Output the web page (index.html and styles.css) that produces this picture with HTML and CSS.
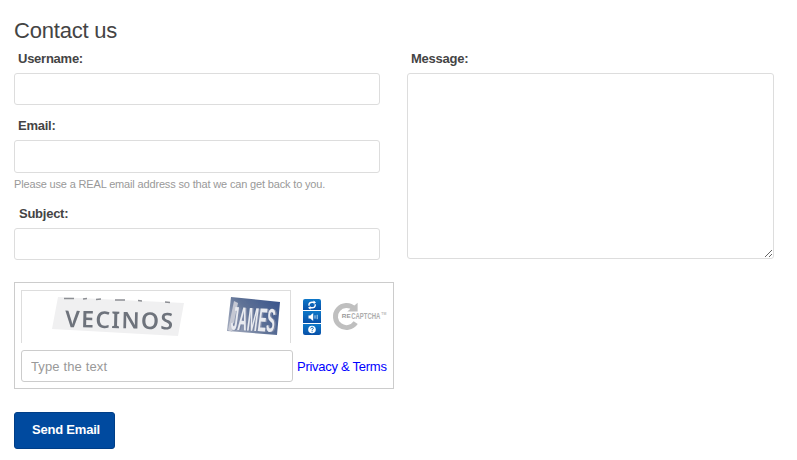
FILE: index.html
```html
<!DOCTYPE html>
<html lang="en">
<head>
<meta charset="utf-8">
<title>Contact us</title>
<link rel="stylesheet" href="styles.css">
</head>
<body>
<form class="contact">
  <h1 class="title">Contact us</h1>
  <div class="columns">
    <div class="column">
      <div class="field">
        <label class="label" for="username">Username:</label>
        <input class="input" id="username" type="text">
      </div>
      <div class="field email">
        <label class="label" for="email">Email:</label>
        <input class="input" id="email" type="text">
        <p class="help">Please use a REAL email address so that we can get back to you.</p>
      </div>
      <div class="field">
        <label class="label subject" for="subject">Subject:</label>
        <input class="input" id="subject" type="text">
      </div>
    </div>
    <div class="column">
      <label class="label" for="message">Message:</label>
      <textarea class="input message" id="message"></textarea>
    </div>
  </div>
  <div class="captcha">
    <div class="captcha-row">
      <div class="challenge">
        <svg width="268" height="52" viewBox="22 291 268 52">
          <defs>
            <filter id="soft" x="-10%" y="-10%" width="120%" height="120%"><feGaussianBlur stdDeviation=".7"/></filter>
            <linearGradient id="navy" x1="0" y1=".6" x2="1" y2="0"><stop offset="0" stop-color="#9aa3b8"/><stop offset=".4" stop-color="#5f7296"/><stop offset="1" stop-color="#35518b"/></linearGradient>
          </defs>
          <g filter="url(#soft)">
            <path d="M58 297 184 303 178 336 52 329z" fill="#f0f0f1"/>
            <path d="M64 298.500h10M83 299l4-.5M96 299.500l5-.5M115 300h10M138 300.500l4 .5M165 302l5 .5" stroke="#8d8f94" stroke-width="1.400"/>
            <text class="word" x="65" y="327" textLength="108" lengthAdjust="spacing" transform="rotate(1.300 65 327)">VECINOS</text>
            <path d="M231 297 280 302 277 335 227 331z" fill="url(#navy)"/>
            <path d="M228 330 234 301 238 303 232 332z" fill="#c5c8d3"/>
            <text class="word-two shade" x="232" y="330" textLength="44" lengthAdjust="spacingAndGlyphs" transform="rotate(3 232 330)">JAMES</text>
            <text class="word-two" x="230.500" y="329.500" textLength="44" lengthAdjust="spacingAndGlyphs" transform="rotate(3 230 329)">JAMES</text>
          </g>
        </svg>
      </div>
      <div class="controls">
        <span class="control"><svg width="18" height="12" viewBox="0 0 18 12"><path d="M6 6.800V5.500Q6.300 3.300 9 3.300h2.200M12.200 5.200v1.300Q11.900 8.800 9.200 8.800H7" fill="none" stroke="#fff" stroke-width="1.400"/><path d="M10.600 1.500 13 3.400 10.600 5.200zM7.500 7 5 8.800l2.500 1.900z" fill="#fff"/></svg></span>
        <span class="control"><svg width="18" height="12" viewBox="0 0 18 12"><path d="M5.500 4.500h1.700L10.200 2v8L7.200 7.500H5.500z" fill="#fff"/><path d="M12 4.300v3.400M14.200 3.800v4.400" stroke="#b8d9f2" stroke-width="1"/></svg></span>
        <span class="control"><svg width="18" height="12" viewBox="0 0 18 12"><circle cx="9" cy="5.500" r="3.800" fill="#fff"/><path d="M7.600 4.500Q7.800 3.200 9.100 3.200q1.300 0 1.300 1.200 0 .7-1.300 1.200v.8M9.100 7.100v1" fill="none" stroke="#1672bd" stroke-width="1"/></svg></span>
      </div>
      <svg class="logo" width="56" height="32" viewBox="332 300 56 32">
        <path d="M354.500 308.500A11.200 11.200 0 1 0 356 322.800" fill="none" stroke="#bfbfbf" stroke-width="5"/>
        <path d="M358 302.500v9h-10.500z" fill="#bfbfbf"/>
        <path d="M341 312.500h10v7h-10z" fill="#fff"/>
        <text class="logo-re" x="342" y="318" textLength="9" lengthAdjust="spacingAndGlyphs">RE</text>
        <text class="logo-name" x="351.500" y="319.500" textLength="29.500" lengthAdjust="spacingAndGlyphs">CAPTCHA</text>
        <text class="logo-tm" x="382" y="315.500" textLength="5" lengthAdjust="spacingAndGlyphs">TM</text>
      </svg>
    </div>
    <div class="answer-row">
      <input class="answer" type="text" placeholder="Type the text">
      <a class="terms" href="#">Privacy &amp; Terms</a>
    </div>
  </div>
  <button class="send" type="button">Send Email</button>
</form>
</body>
</html>
```
FILE: styles.css
```css
* { box-sizing: border-box; }
body {
  margin: 0;
  background: #fff;
  color: #444;
  font-family: "Liberation Sans", Arial, sans-serif;
  font-size: 13px;
}
.contact { padding: 17px 0 0 14px; }
.title {
  margin: 0;
  font-size: 22px;
  line-height: 28px;
  font-weight: 400;
  letter-spacing: -.2px;
}
.columns {
  display: grid;
  grid-template-columns: 366px 367px;
  column-gap: 27px;
}
.column { min-width: 0; }
.field { height: 67px; }
.field.email { height: 88px; }
.label {
  display: block;
  height: 28px;
  padding: 5px 0 0 4px;
  line-height: 18px;
  font-weight: 700;
  letter-spacing: -.25px;
}
.label.subject { padding-left: 5px; }
.input {
  display: block;
  width: 100%;
  height: 32px;
  margin: 0;
  padding: 5px 9px;
  border: 1px solid #ddd;
  border-radius: 3px;
  background: #fff;
  outline: 0;
  font: inherit;
}
.email .input { height: 33px; }
.input.message { height: 186px; }
.help {
  margin: 4px 0 0;
  font-size: 11px;
  line-height: 15px;
  letter-spacing: -.16px;
  color: #999;
}
.captcha {
  width: 380px;
  height: 107px;
  margin-top: 15px;
  padding: 7px 6px;
  border: 1px solid #ccc;
}
.captcha-row { display: flex; }
.challenge {
  width: 270px;
  height: 53px;
  border: 1px solid #ddd;
  border-bottom: 0;
}
.challenge svg { display: block; }
.word {
  font: 600 23px "Noto Sans", sans-serif;
  fill: #6e737b;
}
.word-two { font: italic 700 33px "Liberation Sans", sans-serif; fill: #e9ebf0; }
.shade { fill: #7b87a5; }
.controls {
  display: flex;
  flex-direction: column;
  gap: 1px;
  width: 18px;
  height: 36px;
  margin: 9px 0 0 12px;
  border-radius: 2px;
  overflow: hidden;
}
.control {
  display: block;
  flex: 1;
  min-height: 0;
  background: linear-gradient(#0e78c8, #0850a8);
}
.control svg { display: block; }
.logo { display: block; margin: 10px 0 0 11px; }
.logo text { fill: #b9b9b9; font-family: "Liberation Sans", sans-serif; font-weight: 700; }
.logo .logo-re { font-size: 6px; fill: #999; }
.logo .logo-name { font-size: 10px; fill: #adadad; }
.logo .logo-tm { font-size: 4px; }
.answer-row { display: flex; align-items: center; margin-top: 7px; }
.answer {
  flex: none;
  width: 272px;
  height: 32px;
  padding: 0 9px;
  border: 1px solid #ccc;
  border-radius: 3px;
  outline: 0;
  font: 13px "Liberation Sans", sans-serif;
  letter-spacing: .13px;
}
.answer::placeholder { color: #999; opacity: 1; }
.terms {
  margin-left: 4px;
  color: #00f;
  letter-spacing: -.27px;
  text-decoration: none;
  white-space: nowrap;
}
.send {
  display: block;
  width: 101px;
  height: 37px;
  margin-top: 23px;
  padding: 0 0 2px 3px;
  border: 1px solid #003e87;
  border-radius: 3px;
  background: #004a9f;
  color: #fff;
  font: 700 13px "Liberation Sans", sans-serif;
  letter-spacing: -.2px;
}
```
